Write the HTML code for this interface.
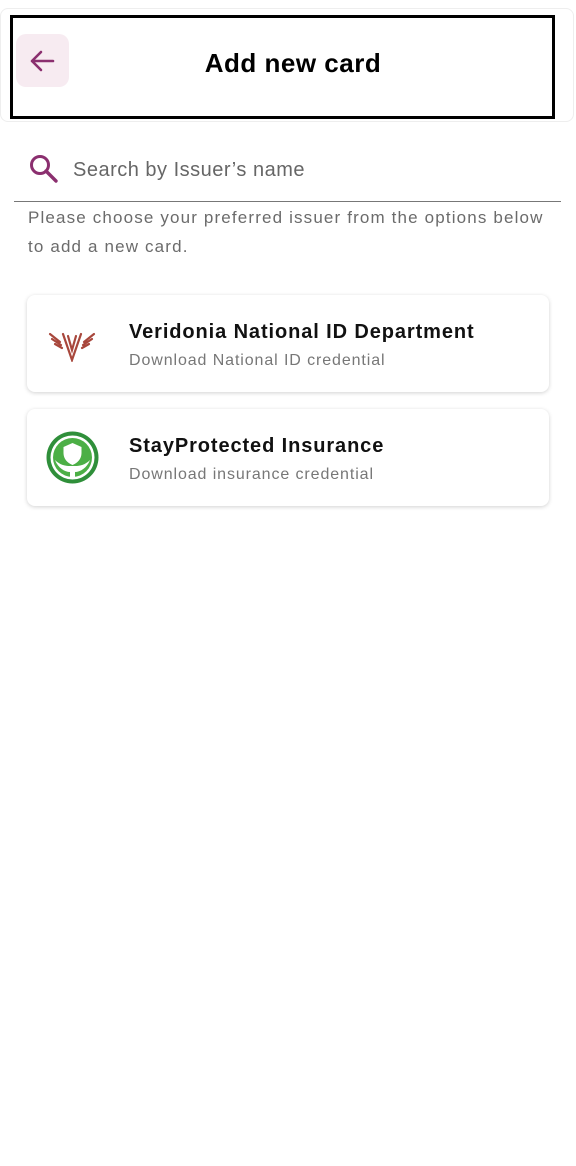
<!DOCTYPE html>
<html><head><style>
body{margin:0;width:576px;height:1166px;background:#fff;font-family:"Liberation Sans",sans-serif;position:relative;overflow:hidden}
.abs{position:absolute}
.card{position:absolute;left:27px;width:522px;height:97px;background:#fff;border-radius:8px;box-shadow:0 1px 4px rgba(0,0,0,0.18)}
.t{position:absolute;left:102px;top:26px;font-size:20px;font-weight:600;color:#111;letter-spacing:0.9px}
.s{position:absolute;left:102px;top:57px;font-size:16px;color:#777;letter-spacing:0.9px}
</style></head><body>
<div class="abs" style="left:0;top:8px;width:574px;height:114px;border:1px solid #eee;border-radius:8px;box-sizing:border-box"></div>
<div class="abs" style="left:10px;top:15px;width:545px;height:104px;border:3px solid #000;box-sizing:border-box"></div>
<div class="abs" style="left:16px;top:34px;width:53px;height:53px;background:#f7ebf1;border-radius:10px"></div>
<svg class="abs" style="left:28px;top:47px" width="28" height="28" viewBox="0 0 28 28"><path d="M25 14H4M13 5L4 14l9 9" fill="none" stroke="#8b2f6f" stroke-width="2.6" stroke-linecap="round" stroke-linejoin="round"/></svg>
<div class="abs" style="left:0;width:586px;top:48px;text-align:center;font-size:26px;font-weight:600;color:#000;letter-spacing:0.5px">Add new card</div>
<svg class="abs" style="left:28px;top:153px" width="32" height="32" viewBox="0 0 32 32"><circle cx="12" cy="12" r="8.5" fill="none" stroke="#8b2f6f" stroke-width="3"/><path d="M18 18l10 10" stroke="#8b2f6f" stroke-width="3.4" stroke-linecap="round"/></svg>
<div class="abs" style="left:73px;top:159px;font-size:20px;color:#666;letter-spacing:0.5px">Search by Issuer’s name</div>
<div class="abs" style="left:14px;top:201px;width:547px;height:1px;background:#777"></div>
<div class="abs" style="left:28px;top:203px;font-size:17px;color:#6b6b6b;line-height:29px;width:540px;letter-spacing:1.15px;white-space:nowrap">Please choose your preferred issuer from the options below<br>to add a new card.</div>
<div class="card" style="top:295px">
<svg class="abs" style="left:20px;top:33px" width="50" height="34" viewBox="0 0 50 34"><g fill="none" stroke="#a8473c" stroke-width="2.2" stroke-linecap="round"><path d="M3 6l10 8M5 11l9 6M8 16l7 4"/><path d="M47 6l-10 8M45 11l-9 6M42 16l-7 4"/><path d="M16 6l9 26 9-26"/><path d="M21 8l4 14 4-14"/></g></svg>
<div class="t">Veridonia National ID Department</div>
<div class="s">Download National ID credential</div>
</div>
<div class="card" style="top:409px">
<svg class="abs" style="left:18px;top:21px" width="55" height="55" viewBox="0 0 55 55"><circle cx="27.5" cy="27.5" r="26" fill="#2f8f3a"/><circle cx="27.5" cy="27.5" r="22" fill="#fff"/><circle cx="27.5" cy="27.5" r="19.5" fill="#4caf46"/><path d="M27.5 13l9 4v6c0 6-4 10-9 12-5-2-9-6-9-12v-6z" fill="#fff"/><path d="M10 30c3 8 10 12 15 12v5h5v-5c5 0 12-4 15-12-5 5-10 6-15 6h-5c-5 0-10-1-15-6z" fill="#fff"/></svg>
<div class="t">StayProtected Insurance</div>
<div class="s">Download insurance credential</div>
</div>
</body></html>
